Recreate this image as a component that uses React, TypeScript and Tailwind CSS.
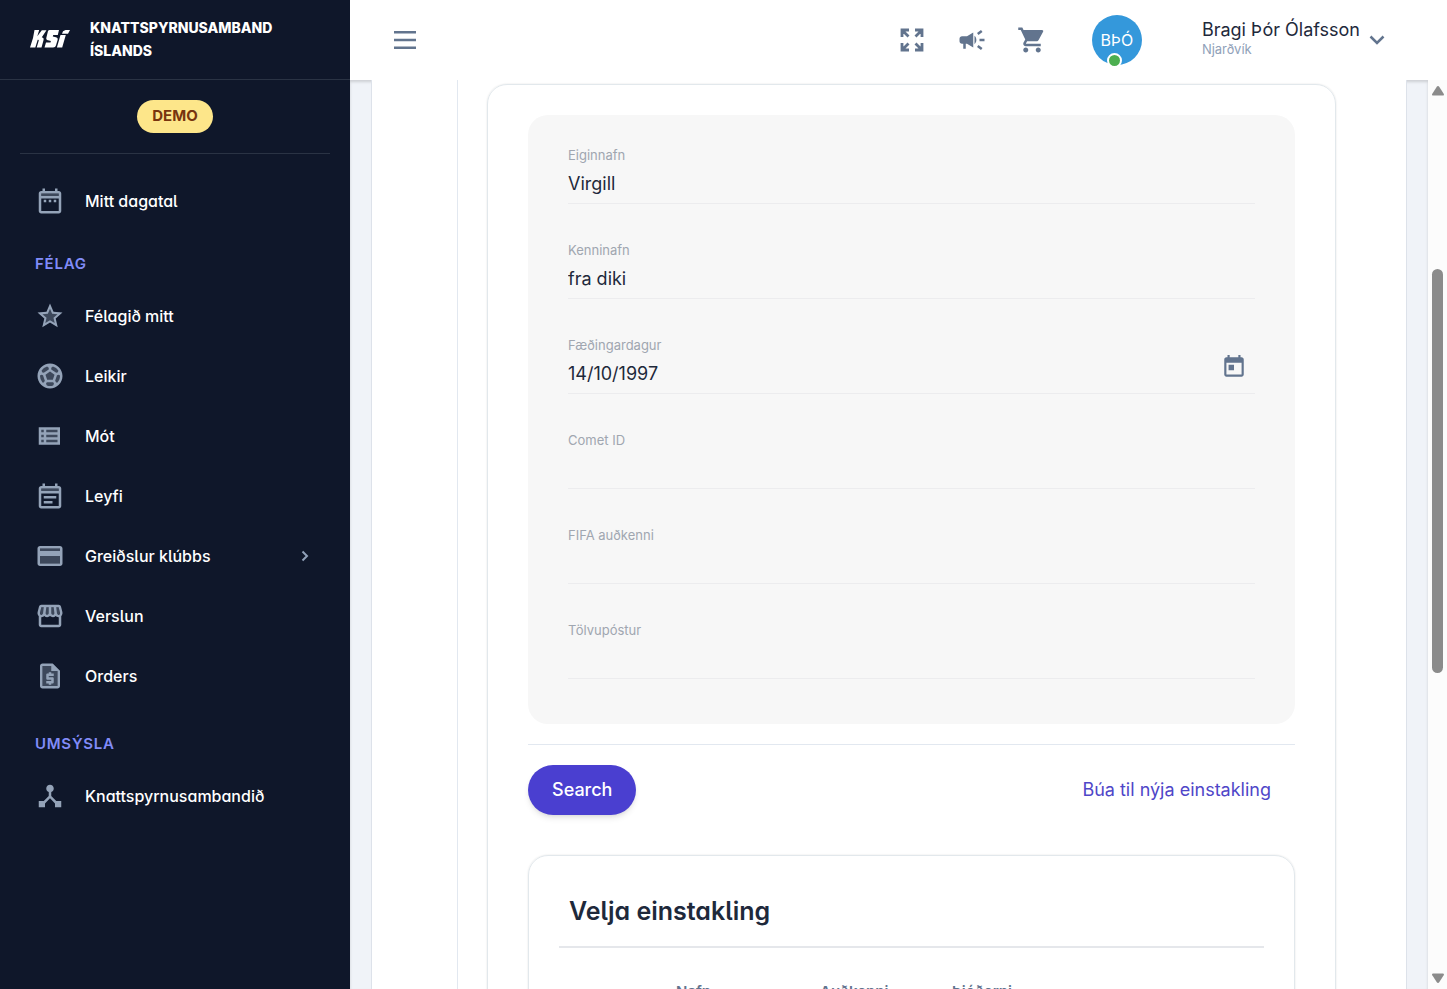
import React from "react";
import {
  MdOutlineStorefront,
  MdOutlineSportsSoccer,
  MdOutlineRequestQuote,
  MdStarBorder,
  MdDeviceHub,
  MdShoppingCart,
} from "react-icons/md";

type TwoToneProps = { shade?: React.ReactNode; children: React.ReactNode };

function TwoTone({ shade, children }: TwoToneProps) {
  return (
    <svg viewBox="0 0 24 24" className="size-[30px]" fill="currentColor" aria-hidden="true">
      <g opacity="0.35">{shade}</g>
      {children}
    </svg>
  );
}

const icons = {
  dates: (
    <TwoTone shade={<path d="M5 6h14v2H5z" />}>
      <path d="M19 4h-1V2h-2v2H8V2H6v2H5c-1.1 0-2 .9-2 2v14c0 1.1.9 2 2 2h14c1.1 0 2-.9 2-2V6c0-1.1-.9-2-2-2zm0 16H5V10h14v10zm0-12H5V6h14v2zM7 11h2v2H7zm4 0h2v2h-2zm4 0h2v2h-2z" />
    </TwoTone>
  ),
  star: (
    <TwoTone shade={<path d="M12 4l2.4 5.7 6.1.5-4.7 4 1.4 6-5.2-3.2-5.2 3.2 1.4-6-4.7-4 6.1-.5z" />}>
      <MdStarBorder size={24} />
    </TwoTone>
  ),
  ball: (
    <TwoTone shade={<circle cx="12" cy="12" r="9" />}>
      <MdOutlineSportsSoccer size={24} />
    </TwoTone>
  ),
  list: (
    <TwoTone shade={<path d="M4 6h15v12H4z" />}>
      <path d="M3 5v14h17V5H3zm4 2v2H5V7h2zm-2 6v-2h2v2H5zm0 2h2v2H5v-2zm13 2H9v-2h9v2zm0-4H9v-2h9v2zm0-4H9V7h9v2z" />
    </TwoTone>
  ),
  note: (
    <TwoTone shade={<path d="M5 6h14v2H5z" />}>
      <path d="M19 4h-1V2h-2v2H8V2H6v2H5c-1.1 0-2 .9-2 2v14c0 1.1.9 2 2 2h14c1.1 0 2-.9 2-2V6c0-1.1-.9-2-2-2zm0 16H5V10h14v10zm0-12H5V6h14v2zM7 12h10v2H7zm0 4h7v2H7z" />
    </TwoTone>
  ),
  card: (
    <TwoTone shade={<path d="M4 6h16v12H4z" />}>
      <path d="M20 4H4c-1.1 0-2 .9-2 2v12c0 1.1.9 2 2 2h16c1.1 0 2-.9 2-2V6c0-1.1-.9-2-2-2zm0 14H4v-6h16v6zm0-10H4V6h16v2z" />
    </TwoTone>
  ),
  store: (
    <TwoTone shade={<path d="M5 5h14l1 5-2 1H6l-2-1z" />}>
      <MdOutlineStorefront size={24} />
    </TwoTone>
  ),
  quote: (
    <TwoTone shade={<path d="M6 4h8l4 4v12H6z" />}>
      <MdOutlineRequestQuote size={24} />
      <path d="M14 2v6h6z" />
    </TwoTone>
  ),
  hub: (
    <TwoTone>
      <MdDeviceHub size={24} />
    </TwoTone>
  ),
};

type Item = { label: string; icon: React.ReactNode; children?: boolean };

const club: Item[] = [
  { label: "Félagið mitt", icon: icons.star },
  { label: "Leikir", icon: icons.ball },
  { label: "Mót", icon: icons.list },
  { label: "Leyfi", icon: icons.note },
  { label: "Greiðslur klúbbs", icon: icons.card, children: true },
  { label: "Verslun", icon: icons.store },
  { label: "Orders", icon: icons.quote },
];

function NavItem({ item }: { item: Item }) {
  return (
    <li>
      <a href="#" className="flex h-[60px] items-center gap-5 pr-9 pl-[35px]">
        <span className="text-[#94a3b8]">{item.icon}</span>
        <span className="grow text-base font-medium text-white">{item.label}</span>
        {item.children && (
          <svg viewBox="0 0 18 18" className="size-[18px] text-slate-400" fill="none" stroke="currentColor" strokeWidth="2" aria-hidden="true">
            <path d="M6.500 4.500l4.500 4.500-4.500 4.500" />
          </svg>
        )}
      </a>
    </li>
  );
}

function NavHeading({ children }: { children: string }) {
  return (
    <h2 className="flex h-[43px] items-center pl-[35px] text-[15px] font-semibold tracking-wider text-[#818cf8]">
      {children}
    </h2>
  );
}

function Logo() {
  return (
    <svg viewBox="0 0 40 18" className="h-[18px] w-10" fill="white" aria-label="KSÍ" role="img">
      <path d="M4.500 0h4.700L7.300 6.200 11.800.3h4.700L11.800 7.200c1.600.4 2.200 1.300 1.700 3L11.500 17.500H6.700l2-6.700c.2-.8-.1-1.100-1-1.100L5.300 17.500H0L3 8z" />
      <path d="M19.500 0H29l-1.200 5h-4.600l-.4 1.500 3.200.7c1.500.4 2 1.300 1.600 2.800L26 15.300c-.5 1.500-1.400 2.200-3 2.200H14.500l1.500-5h4.500l.4-1.500-2.900-.8c-1.500-.4-2.100-1.300-1.600-2.800l1.300-5.200C18 .8 18.500 0 19.500 0z" />
      <path d="M30.500 5h5.300l-3.600 12.500h-5.300zM35.500 0H40l-2 3.700h-6L33 1.200z" />
    </svg>
  );
}

function Sidebar() {
  return (
    <aside className="flex w-[350px] shrink-0 flex-col bg-[#0f172a] [font-feature-settings:'cv11','cv05']">
      <div className="flex h-20 items-center gap-5 border-b border-[#2a3344] pb-[2px] pl-[30px]">
        <Logo />
        <p className="w-[200px] text-[14px] leading-[23px] font-extrabold text-white">KNATTSPYRNUSAMBAND ÍSLANDS</p>
      </div>
      <div className="mx-5 flex justify-center border-b border-[#2a3344] py-5">
        <span className="flex h-[33px] items-center rounded-full bg-[#fde68a] px-[15px] text-[15px] font-bold text-[#78350f]">
          DEMO
        </span>
      </div>
      <nav className="pt-[17px]">
        <ul>
          <NavItem item={{ label: "Mitt dagatal", icon: icons.dates }} />
        </ul>
        <div className="pt-3">
          <NavHeading>FÉLAG</NavHeading>
          <ul>
            {club.map((item) => (
              <NavItem key={item.label} item={item} />
            ))}
          </ul>
        </div>
        <div className="pt-[17px]">
          <NavHeading>UMSÝSLA</NavHeading>
          <ul>
            <NavItem item={{ label: "Knattspyrnusambandið", icon: icons.hub }} />
          </ul>
        </div>
      </nav>
    </aside>
  );
}

function TopBar() {
  return (
    <header className="flex h-20 shrink-0 items-center bg-white pr-[60px] pl-10 text-slate-500">
      <button type="button" aria-label="Valmynd" className="mr-auto">
        <svg viewBox="0 0 30 30" className="size-[30px]" fill="currentColor" aria-hidden="true">
          <path d="M4 6h22v2.500H4zM4 13.750h22v2.500H4zM4 21.500h22v2.500H4z" />
        </svg>
      </button>
      <div className="flex items-center gap-[30px]">
        <button type="button" aria-label="Fylla skjá">
          <svg viewBox="0 0 30 30" className="size-[30px]" fill="none" stroke="currentColor" strokeWidth="2.800" aria-hidden="true">
            <path d="M12 5H5v7M5 5l6.500 6.500M18 5h7v7M25 5l-6.500 6.500M12 25H5v-7M5 25l6.500-6.500M18 25h7v-7M25 25l-6.500-6.500" />
          </svg>
        </button>
        <button type="button" aria-label="Tilkynningar">
          <svg viewBox="0 0 24 24" className="size-[30px]" fill="currentColor" aria-hidden="true">
            <path d="M18 11v2h4v-2h-4zm-2 6.610c.96.710 2.210 1.650 3.200 2.390.4-.53.800-1.070 1.200-1.600-.99-.74-2.240-1.680-3.200-2.400-.4.540-.8 1.080-1.200 1.610zM20.400 5.600c-.4-.53-.8-1.070-1.200-1.600-.99.740-2.240 1.680-3.200 2.400.4.530.8 1.070 1.200 1.600.96-.72 2.210-1.650 3.200-2.400zM4 9c-1.100 0-2 .9-2 2v2c0 1.100.9 2 2 2h1v4h2v-4h1l5 3V6L8 9H4zm11.500 3c0-1.330-.58-2.530-1.500-3.350v6.690c.92-.81 1.500-2.010 1.500-3.340z" />
          </svg>
        </button>
        <button type="button" aria-label="Karfa">
          <MdShoppingCart size={30} />
        </button>
      </div>
      <button type="button" className="ml-[45px] flex items-center text-left">
        <span className="relative flex size-[50px] items-center justify-center rounded-full bg-[#3498db] text-base text-white">
          BÞÓ
          <span className="absolute -bottom-[3px] left-[15px] size-[15px] rounded-full border-2 border-white bg-[#4caf50]" />
        </span>
        <span className="ml-[60px] flex flex-col pb-1">
          <span className="text-[18px] leading-[22px] text-[#1e293b]">Bragi Þór Ólafsson</span>
          <span className="text-[13px] leading-[17px] text-slate-400">Njarðvík</span>
        </span>
        <svg viewBox="0 0 20 20" className="ml-[7px] size-5" fill="none" stroke="currentColor" strokeWidth="2.500" aria-hidden="true">
          <path d="M3.500 6.500L10 13l6.500-6.500" />
        </svg>
      </button>
    </header>
  );
}

const fields = [
  { id: "eiginnafn", label: "Eiginnafn", value: "Virgill" },
  { id: "kenninafn", label: "Kenninafn", value: "fra diki" },
  { id: "faedingardagur", label: "Fæðingardagur", value: "14/10/1997", date: true },
  { id: "comet", label: "Comet ID", value: "" },
  { id: "fifa", label: "FIFA auðkenni", value: "" },
  { id: "tolvupostur", label: "Tölvupóstur", value: "" },
];

function Field({ id, label, value, date }: (typeof fields)[number]) {
  return (
    <div className="relative h-[60px] border-b border-[#ececee]">
      <label htmlFor={id} className="block text-[13px] leading-[22px] text-[#a0a6b0]">
        {label}
      </label>
      <input
        id={id}
        defaultValue={value}
        className="block h-[34px] w-full bg-transparent text-[18px] text-[#1e293b] outline-none"
      />
      {date && (
        <button type="button" aria-label="Velja dagsetningu" className="absolute top-5 right-2 text-slate-500">
          <svg viewBox="0 0 24 24" className="size-[26px]" fill="currentColor" aria-hidden="true">
            <path d="M19 3h-1V1h-2v2H8V1H6v2H5c-1.110 0-1.990.9-1.990 2L3 19c0 1.100.89 2 2 2h14c1.100 0 2-.9 2-2V5c0-1.100-.9-2-2-2zm0 16H5V8h14v11zM7 10h5v5H7z" />
          </svg>
        </button>
      )}
    </div>
  );
}

function Results() {
  return (
    <section className="mt-10 rounded-[20px] border border-[#e2e8ec] px-[30px] pt-[29px] pb-10 shadow-[0_0_2px_rgba(0,0,0,0.12)]">
      <h1 className="border-b-2 border-[#e5e7eb] px-[10px] pt-[7px] pb-[16px] text-[25px] leading-[38px] font-semibold text-[#1e293b] [font-feature-settings:'cv11','cv05']">
        Velja einstakling
      </h1>
      <table className="mt-[33px] w-full table-fixed text-left text-[15px] leading-[22px] text-slate-500">
        <thead>
          <tr>
            <th className="w-[117px]" aria-label="Val" />
            <th className="w-[144px] font-semibold">Nafn</th>
            <th className="w-[132px] font-semibold">Auðkenni</th>
            <th className="font-semibold">Þjóðerni</th>
          </tr>
        </thead>
      </table>
    </section>
  );
}

function ScrollBar() {
  return (
    <div className="flex w-[19px] shrink-0 flex-col items-center bg-[#fcfcfc] py-[5px]" aria-hidden="true">
      <svg viewBox="0 0 14 12" className="h-3 w-[14px]" fill="#8b8b8b">
        <path d="M7 1c.5 0 .9.3 1.200.7l4.500 7c.6 1 .2 1.800-.8 1.800H2.100c-1 0-1.400-.8-.8-1.800l4.500-7C6.100 1.300 6.500 1 7 1z" />
      </svg>
      <div className="flex w-[11px] grow flex-col">
        <div className="grow-[172]" />
        <div className="grow-[404] rounded-full bg-[#8b8b8b]" />
        <div className="grow-[299]" />
      </div>
      <svg viewBox="0 0 14 12" className="h-3 w-[14px]" fill="#8b8b8b">
        <path d="M7 11c.5 0 .9-.3 1.200-.7l4.500-7c.6-1 .2-1.800-.8-1.800H2.100c-1 0-1.400.8-.8 1.800l4.500 7c.3.400.7.7 1.200.7z" />
      </svg>
    </div>
  );
}

export default function App() {
  return (
    <div className="flex h-screen overflow-hidden bg-white font-['Inter',sans-serif]">
      <Sidebar />
      <div className="flex min-w-0 grow flex-col">
        <TopBar />
        <div className="flex min-h-0 grow">
          <main className="min-w-0 grow overflow-hidden bg-[#f0f3f8] px-[21px] shadow-[inset_0_2px_3px_rgba(0,0,0,0.15)]">
            <div className="border-x border-[#dde2ea] bg-white pr-[70px] pl-[85px]">
              <div className="border-l border-[#e2e8f0] pt-1 pl-[29px]">
                <div className="rounded-[20px] border border-[#e2e8ec] px-10 pt-[30px] pb-10 shadow-[0_0_2px_rgba(0,0,0,0.12)]">
                  <form onSubmit={(e) => e.preventDefault()}>
                    <div className="flex flex-col gap-[35px] rounded-[20px] bg-[#f7f7f7] px-10 pt-[29px] pb-[45px]">
                      {fields.map((f) => (
                        <Field key={f.id} {...f} />
                      ))}
                    </div>
                    <div className="mt-5 flex items-center justify-between border-t border-[#e2e8f0] pt-5">
                      <button
                        type="submit"
                        className="h-[50px] rounded-full bg-[#4a3fd0] px-6 pb-[2px] text-[18px] font-medium text-white shadow-md"
                      >
                        Search
                      </button>
                      <a href="#" className="px-6 pb-[2px] text-[18px] text-[#4f46c8]">
                        Búa til nýja einstakling
                      </a>
                    </div>
                  </form>
                  <Results />
                </div>
              </div>
            </div>
          </main>
          <ScrollBar />
        </div>
      </div>
    </div>
  );
}
